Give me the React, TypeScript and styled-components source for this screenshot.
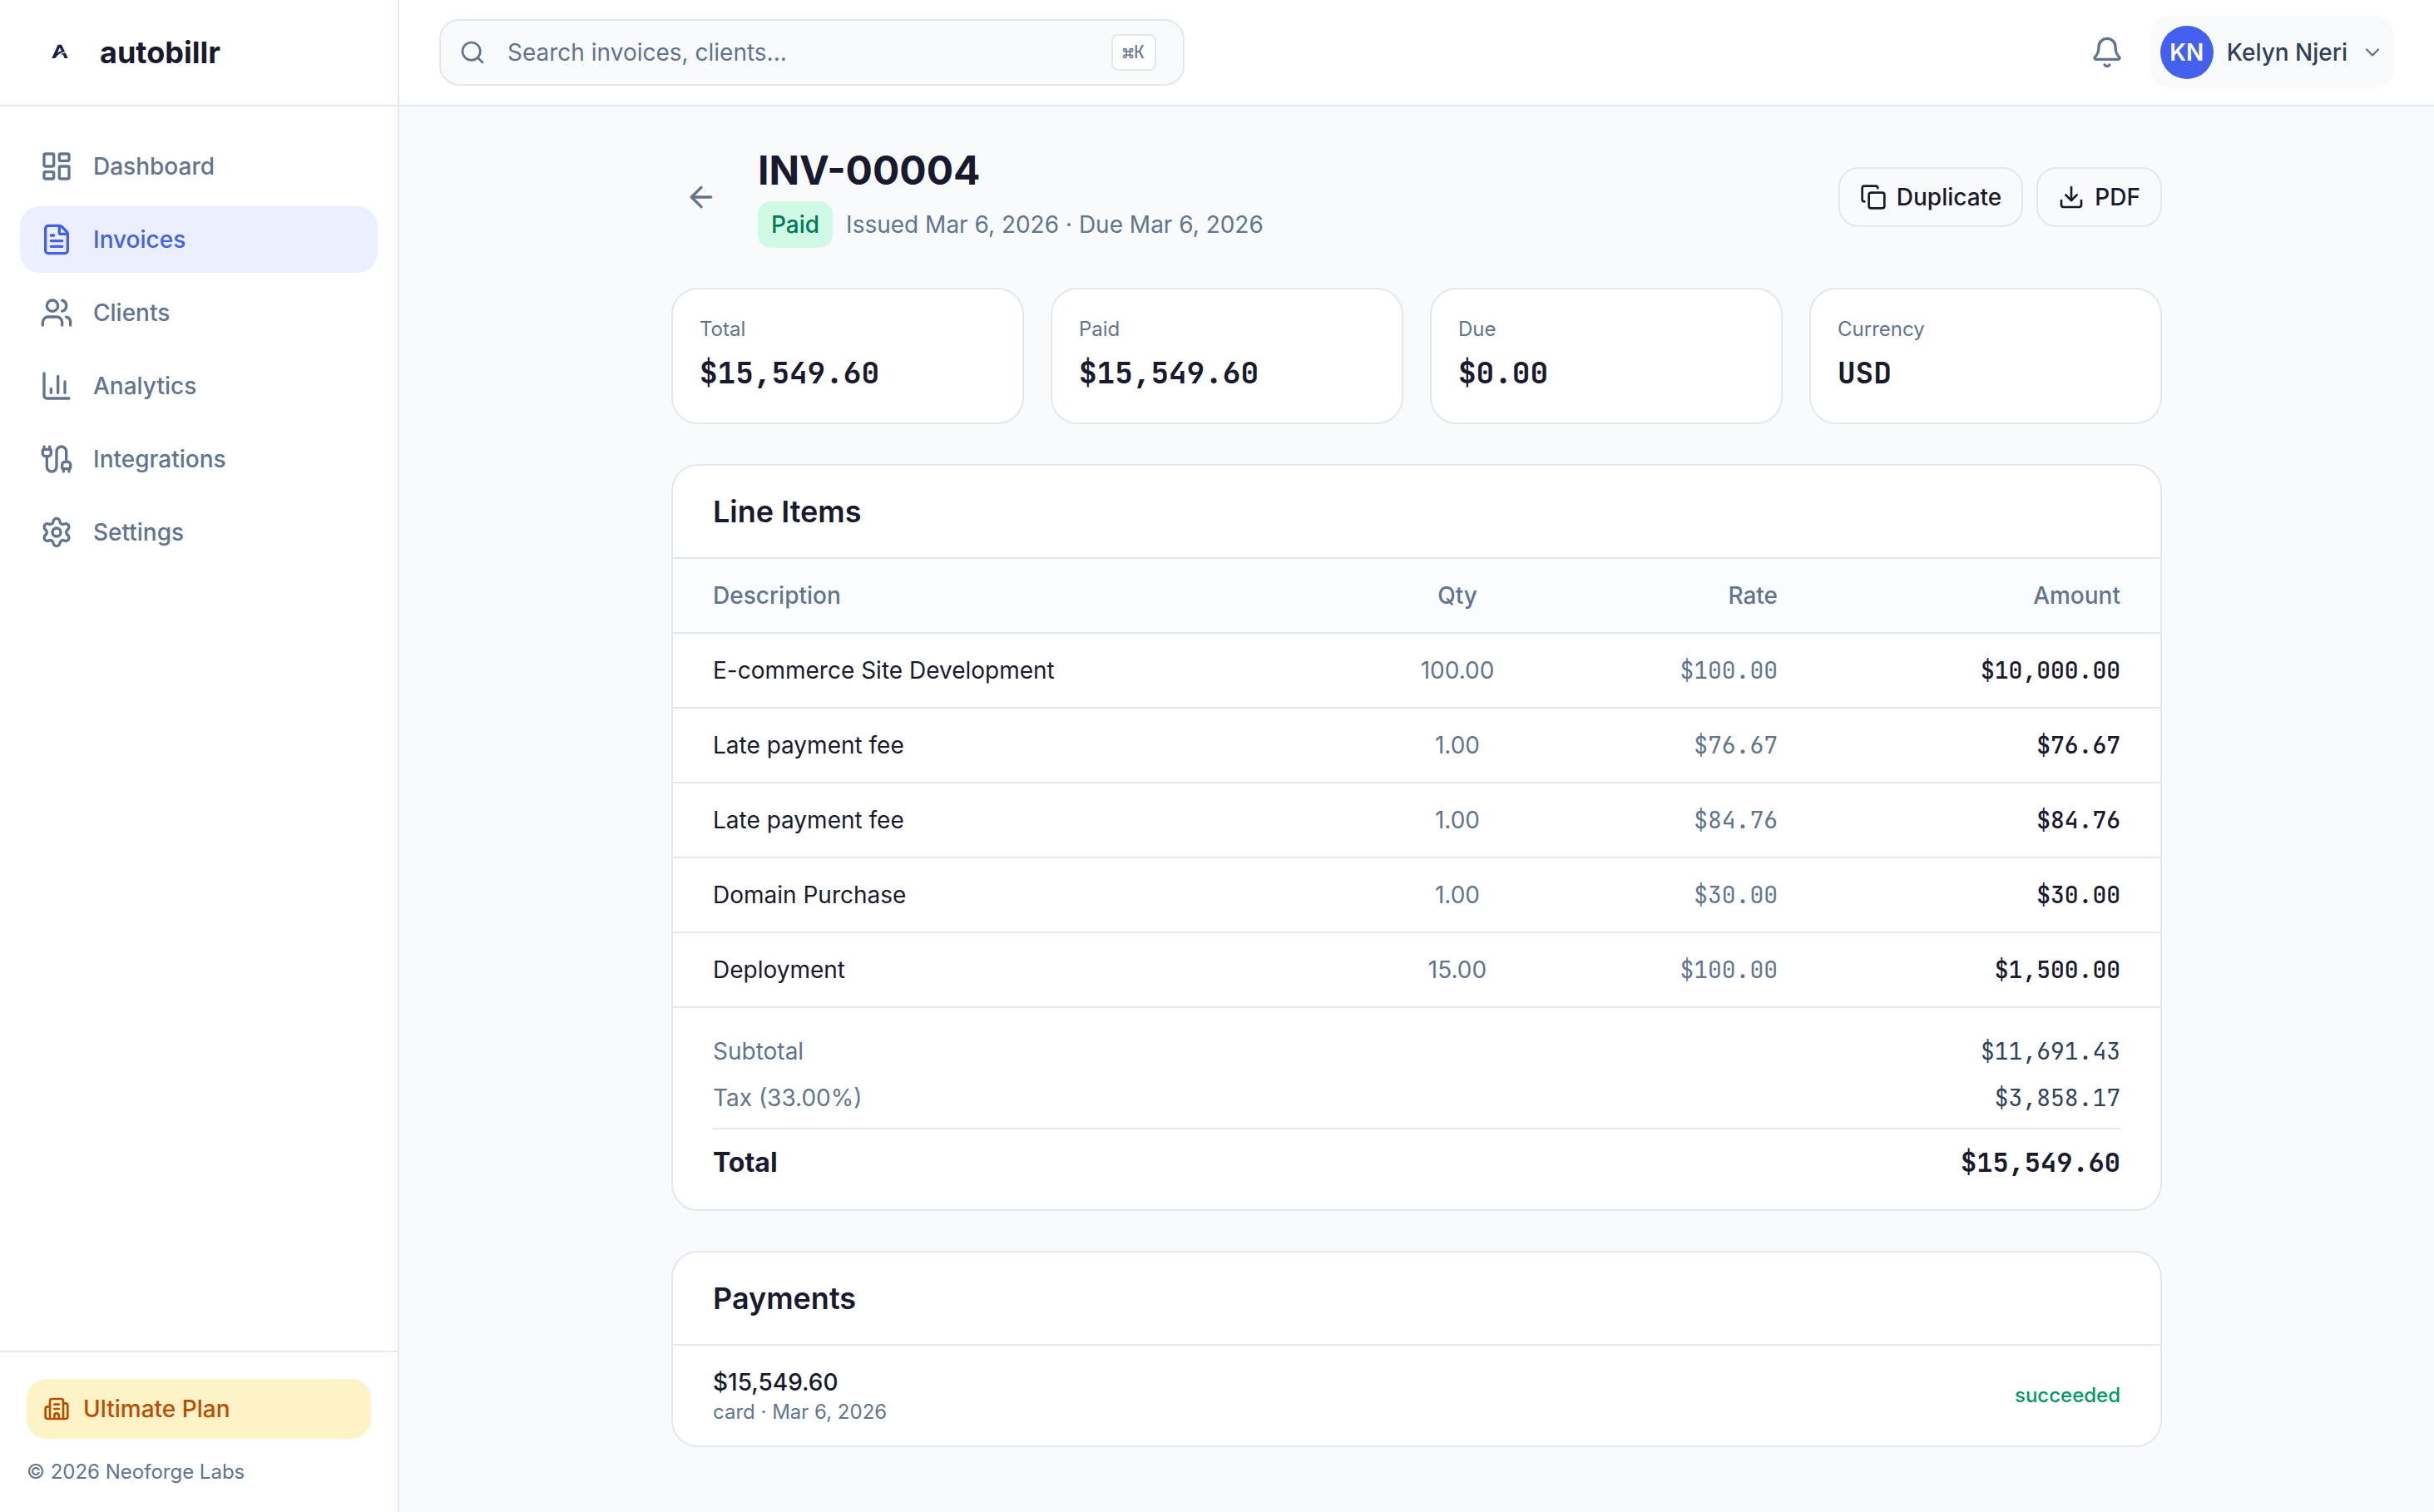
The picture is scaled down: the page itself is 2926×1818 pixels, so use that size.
import React from 'react';
import styled, { createGlobalStyle } from 'styled-components';
import {
  ArrowLeft,
  Bell,
  Cable,
  ChartColumn,
  ChevronDown,
  Copy,
  Download,
  FileText,
  LayoutDashboard,
  Search,
  Settings,
  Users,
  type LucideIcon,
} from 'lucide-react';

const color = {
  page: '#f8fafc',
  surface: '#ffffff',
  tableHead: '#fbfcfd',
  border: '#e2e8f0',
  ink: '#1a1a2e',
  strong: '#314158',
  muted: '#62748e',
  primary: '#4361ee',
  primarySoft: '#eceffd',
};

const mono = `'JetBrains Mono', 'DejaVu Sans Mono', monospace`;

const GlobalStyle = createGlobalStyle`
  *, *::before, *::after { box-sizing: border-box; }
  body {
    margin: 0;
    background: ${color.page};
    color: ${color.ink};
    font-family: Inter, 'Noto Sans', sans-serif;
    font-size: 28px;
    line-height: 40px;
    -webkit-font-smoothing: antialiased;
  }
  button, input, kbd { font: inherit; color: inherit; }
  h1, h2, p, dl, dt, dd, ul { margin: 0; padding: 0; }
  svg { flex-shrink: 0; display: block; }
`;

const Shell = styled.div`
  display: flex;
  min-height: 100vh;
`;

const Sidebar = styled.aside`
  display: flex;
  flex-direction: column;
  flex: 0 0 480px;
  background: ${color.surface};
  border-right: 2px solid ${color.border};
`;

const Brand = styled.a`
  display: flex;
  align-items: center;
  gap: 16px;
  height: 128px;
  padding: 0 40px;
  border-bottom: 2px solid ${color.border};
  color: ${color.ink};
  font-size: 36px;
  font-weight: 700;
  text-decoration: none;
`;

const Nav = styled.nav`
  display: flex;
  flex: 1;
  flex-direction: column;
  gap: 8px;
  padding: 32px 24px;
`;

const NavLink = styled.a<{ $active?: boolean }>`
  display: flex;
  align-items: center;
  gap: 24px;
  padding: 20px 24px;
  border-radius: 24px;
  background: ${(p) => (p.$active ? color.primarySoft : 'transparent')};
  color: ${(p) => (p.$active ? color.primary : color.muted)};
  font-weight: 500;
  text-decoration: none;
`;

const SidebarFooter = styled.footer`
  display: flex;
  flex-direction: column;
  gap: 24px;
  padding: 32px;
  border-top: 2px solid ${color.border};
`;

const PlanBadge = styled.a`
  display: flex;
  align-items: center;
  gap: 16px;
  padding: 16px 20px;
  border-radius: 24px;
  background: #fef3c6;
  color: #bb4d00;
  font-weight: 500;
  text-decoration: none;
`;

const Small = styled.p`
  color: ${color.muted};
  font-size: 24px;
  line-height: 32px;
`;

const Main = styled.div`
  display: flex;
  flex: 1;
  flex-direction: column;
  min-width: 0;
`;

const TopBar = styled.header`
  display: flex;
  align-items: center;
  justify-content: space-between;
  height: 128px;
  padding: 0 48px;
  background: ${color.surface};
  border-bottom: 2px solid ${color.border};
`;

const SearchBox = styled.label`
  display: flex;
  align-items: center;
  gap: 26px;
  width: 100%;
  max-width: 896px;
  height: 80px;
  padding: 0 32px 0 22px;
  border: 2px solid ${color.border};
  border-radius: 24px;
  background: ${color.page};
  color: ${color.muted};
`;

const SearchInput = styled.input`
  flex: 1;
  min-width: 0;
  padding: 0;
  border: 0;
  outline: 0;
  background: transparent;
  &::placeholder { color: ${color.muted}; opacity: 1; }
`;

const Shortcut = styled.kbd`
  padding: 4px 12px;
  border: 2px solid ${color.border};
  border-radius: 8px;
  background: ${color.surface};
  font-family: ${mono};
  font-size: 22px;
  line-height: 32px;
`;

const TopActions = styled.div`
  display: flex;
  align-items: center;
  gap: 16px;
`;

const IconButton = styled.button`
  display: flex;
  padding: 16px;
  border: 0;
  border-radius: 24px;
  background: transparent;
  color: ${color.muted};
`;

const UserButton = styled.button`
  display: flex;
  align-items: center;
  gap: 16px;
  padding: 12px;
  border: 0;
  border-radius: 24px;
  background: ${color.page};
  color: ${color.strong};
  font-weight: 500;
  svg { color: ${color.muted}; }
`;

const Avatar = styled.span`
  display: grid;
  place-items: center;
  width: 64px;
  height: 64px;
  border-radius: 50%;
  background: ${color.primary};
  color: #fff;
  font-weight: 600;
`;

const Content = styled.main`
  display: flex;
  flex-direction: column;
  gap: 48px;
  width: 100%;
  max-width: 1888px;
  margin: 0 auto;
  padding: 48px;
`;

const PageHeader = styled.div`
  display: flex;
  align-items: center;
  gap: 32px;
`;

const Heading = styled.div`
  display: flex;
  flex: 1;
  flex-direction: column;
  gap: 8px;
`;

const Title = styled.h1`
  font-size: 48px;
  font-weight: 700;
  line-height: 58px;
`;

const Meta = styled.div`
  display: flex;
  align-items: center;
  gap: 16px;
  color: ${color.muted};
`;

const Status = styled.span`
  padding: 8px 16px;
  border-radius: 16px;
  background: #d0fae5;
  color: #007a55;
  font-weight: 500;
`;

const Actions = styled.div`
  display: flex;
  gap: 16px;
`;

const OutlineButton = styled.button`
  display: flex;
  align-items: center;
  gap: 12px;
  padding: 14px 24px;
  border: 2px solid ${color.border};
  border-radius: 24px;
  background: ${color.page};
  color: ${color.ink};
  font-weight: 500;
`;

const Stats = styled.dl`
  display: grid;
  grid-template-columns: repeat(4, 1fr);
  gap: 32px;
`;

const Stat = styled.div`
  display: flex;
  flex-direction: column;
  gap: 8px;
  padding: 32px;
  border: 2px solid ${color.border};
  border-radius: 32px;
  background: ${color.surface};
`;

const StatLabel = styled.dt`
  color: ${color.muted};
  font-size: 24px;
  line-height: 32px;
`;

const StatValue = styled.dd`
  font-family: ${mono};
  font-size: 36px;
  font-weight: 700;
  line-height: 56px;
`;

const Card = styled.section`
  overflow: hidden;
  border: 2px solid ${color.border};
  border-radius: 32px;
  background: ${color.surface};
`;

const CardTitle = styled.h2`
  padding: 32px 48px;
  border-bottom: 2px solid ${color.border};
  font-size: 36px;
  font-weight: 600;
  line-height: 46px;
`;

const Table = styled.table`
  width: 100%;
  table-layout: fixed;
  border-collapse: separate;
  border-spacing: 0;
`;

const Col = styled.col<{ $width?: number }>`
  width: ${(p) => (p.$width ? `${p.$width}px` : 'auto')};
`;

type Align = 'left' | 'center' | 'right';

const HeadCell = styled.th<{ $align?: Align }>`
  padding: 24px 48px;
  border-bottom: 2px solid ${color.border};
  background: ${color.tableHead};
  color: ${color.muted};
  font-weight: 500;
  text-align: ${(p) => p.$align ?? 'left'};
`;

const Cell = styled.td<{ $align?: Align; $muted?: boolean; $mono?: boolean; $medium?: boolean }>`
  height: 90px;
  padding: 0 48px;
  border-bottom: 2px solid ${color.border};
  color: ${(p) => (p.$muted ? color.muted : color.ink)};
  font-family: ${(p) => (p.$mono ? mono : 'inherit')};
  font-weight: ${(p) => (p.$medium ? 500 : 400)};
  text-align: ${(p) => p.$align ?? 'left'};
  white-space: nowrap;
`;

const Totals = styled.dl`
  display: flex;
  flex-direction: column;
  gap: 16px;
  padding: 32px 48px;
`;

const TotalRow = styled.div<{ $grand?: boolean }>`
  display: flex;
  justify-content: space-between;
  padding-top: ${(p) => (p.$grand ? '16px' : '0')};
  border-top: ${(p) => (p.$grand ? `2px solid ${color.border}` : '0')};
  font-size: ${(p) => (p.$grand ? '32px' : '28px')};
  font-weight: ${(p) => (p.$grand ? 700 : 400)};
  line-height: ${(p) => (p.$grand ? '48px' : '40px')};
  dt { color: ${(p) => (p.$grand ? color.ink : color.muted)}; }
  dd {
    color: ${(p) => (p.$grand ? color.ink : color.strong)};
    font-family: ${mono};
  }
`;

const Payment = styled.div`
  display: flex;
  align-items: center;
  justify-content: space-between;
  padding: 24px 48px;
`;

const PaymentAmount = styled.p`
  font-weight: 500;
`;

const PaymentStatus = styled.span`
  color: #009966;
  font-size: 24px;
  font-weight: 500;
  line-height: 32px;
`;

const Logo = () => (
  <svg width="64" height="64" viewBox="0 0 64 64" fill="#1b2345" aria-hidden="true">
    <path d="M22.300 39 L29.600 22.700 H34 L38 31.200 C34.500 31.800 30.500 33.500 26.300 39 Z M31.700 26.300 L29 32.700 C30.700 31.300 32.500 30.500 34.200 30.200 Z" fillRule="evenodd" />
    <path d="M32.500 34.500 C34.500 33.200 36.700 32.500 38.700 32.400 L41.700 39 H37.500 L35.700 34.600 C34.600 34.400 33.500 34.400 32.500 34.500 Z" />
  </svg>
);

const PlanIcon = () => (
  <svg
    width="32"
    height="32"
    viewBox="0 0 24 24"
    fill="none"
    stroke="currentColor"
    strokeWidth="2"
    strokeLinecap="round"
    strokeLinejoin="round"
    aria-hidden="true"
  >
    <path d="M10 12h4" />
    <path d="M10 8h4" />
    <path d="M14 21v-3a2 2 0 0 0-4 0v3" />
    <path d="M6 10H4a2 2 0 0 0-2 2v7a2 2 0 0 0 2 2h16a2 2 0 0 0 2-2V9a2 2 0 0 0-2-2h-2" />
    <path d="M6 21V5a2 2 0 0 1 2-2h8a2 2 0 0 1 2 2v16" />
  </svg>
);

const navItems: { label: string; icon: LucideIcon }[] = [
  { label: 'Dashboard', icon: LayoutDashboard },
  { label: 'Invoices', icon: FileText },
  { label: 'Clients', icon: Users },
  { label: 'Analytics', icon: ChartColumn },
  { label: 'Integrations', icon: Cable },
  { label: 'Settings', icon: Settings },
];

const stats = [
  ['Total', '$15,549.60'],
  ['Paid', '$15,549.60'],
  ['Due', '$0.00'],
  ['Currency', 'USD'],
];

const lineItems = [
  ['E-commerce Site Development', '100.00', '$100.00', '$10,000.00'],
  ['Late payment fee', '1.00', '$76.67', '$76.67'],
  ['Late payment fee', '1.00', '$84.76', '$84.76'],
  ['Domain Purchase', '1.00', '$30.00', '$30.00'],
  ['Deployment', '15.00', '$100.00', '$1,500.00'],
];

export default function App() {
  return (
    <Shell>
      <GlobalStyle />
      <Sidebar>
        <Brand href="#">
          <Logo />
          autobillr
        </Brand>
        <Nav>
          {navItems.map(({ label, icon: Icon }) => (
            <NavLink key={label} href="#" $active={label === 'Invoices'}>
              <Icon size={40} />
              {label}
            </NavLink>
          ))}
        </Nav>
        <SidebarFooter>
          <PlanBadge href="#">
            <PlanIcon />
            Ultimate Plan
          </PlanBadge>
          <Small>© 2026 Neoforge Labs</Small>
        </SidebarFooter>
      </Sidebar>

      <Main>
        <TopBar>
          <SearchBox>
            <Search size={32} />
            <SearchInput type="text" aria-label="Search" placeholder="Search invoices, clients..." />
            <Shortcut>⌘K</Shortcut>
          </SearchBox>
          <TopActions>
            <IconButton type="button" aria-label="Notifications">
              <Bell size={40} />
            </IconButton>
            <UserButton type="button">
              <Avatar>KN</Avatar>
              Kelyn Njeri
              <ChevronDown size={28} />
            </UserButton>
          </TopActions>
        </TopBar>

        <Content>
          <PageHeader>
            <IconButton type="button" aria-label="Back to invoices">
              <ArrowLeft size={40} />
            </IconButton>
            <Heading>
              <Title>INV-00004</Title>
              <Meta>
                <Status>Paid</Status>
                <span>Issued Mar 6, 2026 · Due Mar 6, 2026</span>
              </Meta>
            </Heading>
            <Actions>
              <OutlineButton type="button">
                <Copy size={32} />
                Duplicate
              </OutlineButton>
              <OutlineButton type="button">
                <Download size={32} />
                PDF
              </OutlineButton>
            </Actions>
          </PageHeader>

          <Stats>
            {stats.map(([label, value]) => (
              <Stat key={label}>
                <StatLabel>{label}</StatLabel>
                <StatValue>{value}</StatValue>
              </Stat>
            ))}
          </Stats>

          <Card>
            <CardTitle>Line Items</CardTitle>
            <Table>
              <colgroup>
                <Col />
                <Col $width={194} />
                <Col $width={336} />
                <Col $width={412} />
              </colgroup>
              <thead>
                <tr>
                  <HeadCell scope="col">Description</HeadCell>
                  <HeadCell scope="col" $align="center">Qty</HeadCell>
                  <HeadCell scope="col" $align="right">Rate</HeadCell>
                  <HeadCell scope="col" $align="right">Amount</HeadCell>
                </tr>
              </thead>
              <tbody>
                {lineItems.map(([description, qty, rate, amount], i) => (
                  <tr key={i}>
                    <Cell>{description}</Cell>
                    <Cell $align="center" $muted>{qty}</Cell>
                    <Cell $align="right" $muted $mono>{rate}</Cell>
                    <Cell $align="right" $mono $medium>{amount}</Cell>
                  </tr>
                ))}
              </tbody>
            </Table>
            <Totals>
              <TotalRow>
                <dt>Subtotal</dt>
                <dd>$11,691.43</dd>
              </TotalRow>
              <TotalRow>
                <dt>Tax (33.00%)</dt>
                <dd>$3,858.17</dd>
              </TotalRow>
              <TotalRow $grand>
                <dt>Total</dt>
                <dd>$15,549.60</dd>
              </TotalRow>
            </Totals>
          </Card>

          <Card>
            <CardTitle>Payments</CardTitle>
            <Payment>
              <div>
                <PaymentAmount>$15,549.60</PaymentAmount>
                <Small>card · Mar 6, 2026</Small>
              </div>
              <PaymentStatus>succeeded</PaymentStatus>
            </Payment>
          </Card>
        </Content>
      </Main>
    </Shell>
  );
}
